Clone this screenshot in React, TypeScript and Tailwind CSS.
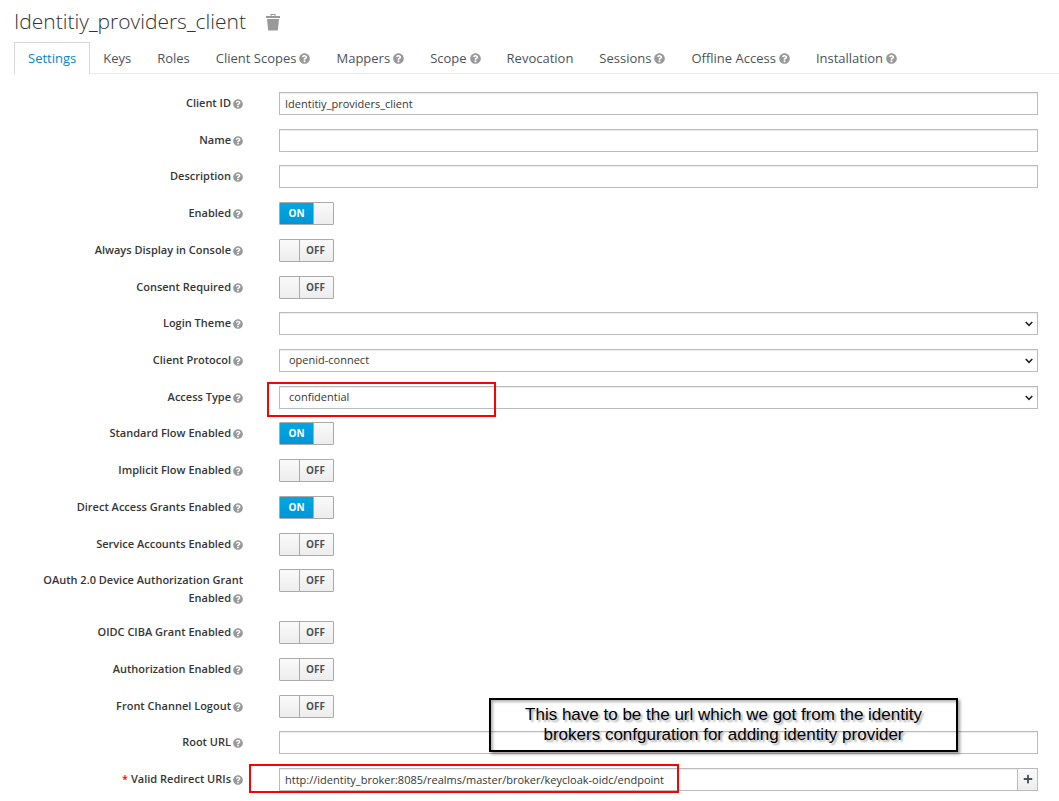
import React, { useState } from 'react';
import clsx from 'clsx';
import { FaQuestionCircle, FaPlus } from 'react-icons/fa';

interface Tab {
  name: string;
  help?: boolean;
}

interface Field {
  id: string;
  label: string;
  kind: 'text' | 'switch' | 'select' | 'list';
  value?: string;
  on?: boolean;
  options?: string[];
  required?: boolean;
  mark?: boolean;
  note?: string[];
}

const tabs: Tab[] = [
  { name: 'Settings' },
  { name: 'Keys' },
  { name: 'Roles' },
  { name: 'Client Scopes', help: true },
  { name: 'Mappers', help: true },
  { name: 'Scope', help: true },
  { name: 'Revocation' },
  { name: 'Sessions', help: true },
  { name: 'Offline Access', help: true },
  { name: 'Installation', help: true },
];

const fields: Field[] = [
  { id: 'clientId', label: 'Client ID', kind: 'text', value: 'Identitiy_providers_client' },
  { id: 'name', label: 'Name', kind: 'text' },
  { id: 'description', label: 'Description', kind: 'text' },
  { id: 'enabled', label: 'Enabled', kind: 'switch', on: true },
  { id: 'alwaysDisplay', label: 'Always Display in Console', kind: 'switch' },
  { id: 'consent', label: 'Consent Required', kind: 'switch' },
  { id: 'loginTheme', label: 'Login Theme', kind: 'select', options: [''] },
  { id: 'protocol', label: 'Client Protocol', kind: 'select', options: ['openid-connect', 'saml'] },
  { id: 'accessType', label: 'Access Type', kind: 'select', options: ['confidential', 'public', 'bearer-only'], mark: true },
  { id: 'standardFlow', label: 'Standard Flow Enabled', kind: 'switch', on: true },
  { id: 'implicitFlow', label: 'Implicit Flow Enabled', kind: 'switch' },
  { id: 'directAccess', label: 'Direct Access Grants Enabled', kind: 'switch', on: true },
  { id: 'serviceAccounts', label: 'Service Accounts Enabled', kind: 'switch' },
  { id: 'deviceGrant', label: 'OAuth 2.0 Device Authorization Grant Enabled', kind: 'switch' },
  { id: 'ciba', label: 'OIDC CIBA Grant Enabled', kind: 'switch' },
  { id: 'authorization', label: 'Authorization Enabled', kind: 'switch' },
  { id: 'frontChannel', label: 'Front Channel Logout', kind: 'switch' },
  {
    id: 'rootUrl',
    label: 'Root URL',
    kind: 'text',
    note: ['This have to be the url which we got from the identity', 'brokers confguration for adding identity provider'],
  },
  {
    id: 'redirectUris',
    label: 'Valid Redirect URIs',
    kind: 'list',
    value: 'http://identity_broker:8085/realms/master/broker/keycloak-oidc/endpoint',
    required: true,
    mark: true,
  },
];

const control = 'block h-[23px] w-full border border-[#bbb] bg-white text-[11px] text-[#363636] shadow-[inset_0_1px_1px_rgba(3,3,3,0.08)] outline-none';

function TrashIcon() {
  return (
    <svg width="14" height="17" viewBox="0 0 14 17" fill="#999" aria-hidden="true">
      <path fillRule="evenodd" d="M4.500 0h5v2H14v2H0V2h4.500zM5.500 1v1h3V1z" />
      <path d="M1 5h12l-1.200 11.500H2.200z" />
    </svg>
  );
}

function Switch({ id, initial = false }: { id: string; initial?: boolean }) {
  const [on, setOn] = useState(initial);

  return (
    <label className="relative flex h-[23px] w-[55px] cursor-pointer overflow-hidden rounded-[1px] border border-[#aaa] text-[10px] font-bold leading-[21px]">
      <input
        id={id}
        type="checkbox"
        checked={on}
        onChange={(e) => setOn(e.target.checked)}
        className="absolute inset-0 m-0 cursor-pointer opacity-0"
      />
      {on && <span className="grow bg-linear-to-b from-[#00a8e1] to-[#0095d9] text-center text-white">ON</span>}
      <span className={clsx('w-5 bg-linear-to-b from-[#fafafa] to-[#ededed] border-[#aaa]', on ? 'border-l' : 'border-r')} />
      {!on && <span className="grow bg-linear-to-b from-[#fafafa] to-[#ededed] pr-[2px] text-center text-[#4d5258]">OFF</span>}
    </label>
  );
}

function Control({ field }: { field: Field }) {
  if (field.kind === 'switch') {
    return <Switch id={field.id} initial={field.on} />;
  }

  if (field.kind === 'select') {
    return (
      <div className="relative">
        <select id={field.id} className={clsx(control, 'appearance-none pl-[9px] pr-6')}>
          {field.options?.map((option) => (
            <option key={option}>{option}</option>
          ))}
        </select>
        <svg className="pointer-events-none absolute right-[5px] top-[9px]" width="8" height="6" viewBox="0 0 8 6" fill="none" stroke="#222" strokeWidth="1.600">
          <path d="M.7 1 4 4.300 7.300 1" />
        </svg>
      </div>
    );
  }

  if (field.kind === 'list') {
    return (
      <div className="flex">
        <input id={field.id} type="text" defaultValue={field.value} className={clsx(control, 'min-w-0 grow px-[5px]')} />
        <button
          type="button"
          aria-label="Add"
          className="-ml-px flex h-[23px] w-[21px] shrink-0 items-center justify-center border border-[#bbb] bg-linear-to-b from-[#fafafa] to-[#ededed] text-[#4d5258]"
        >
          <FaPlus size={10} />
        </button>
      </div>
    );
  }

  return <input id={field.id} type="text" defaultValue={field.value} className={clsx(control, 'px-[5px]')} />;
}

function FormRow({ field }: { field: Field }) {
  return (
    <div className="flex">
      <div className="w-[229px] shrink-0 pt-[2px] text-right text-[11px] font-semibold leading-[18px] text-[#363636]">
        <label htmlFor={field.id}>
          {field.required && <span className="text-[#f00]">* </span>}
          {field.label}
        </label>
        <FaQuestionCircle size={10} className="ml-[2px] inline align-[-2px] text-[#999]" />
      </div>
      <div className="relative ml-9 min-w-0 grow">
        <Control field={field} />
        {field.mark && field.kind === 'select' && (
          <div className="pointer-events-none absolute -left-3 -top-1 h-[35px] w-[229px] border-2 border-[#f00]" />
        )}
        {field.mark && field.kind === 'list' && (
          <div className="pointer-events-none absolute -left-[30px] -top-1 h-[29px] w-[430px] border-2 border-[#f00]" />
        )}
        {field.note && (
          <div className="pointer-events-none absolute left-[210px] -top-[33px] h-[54px] w-[469px] border-2 border-black pt-[5px] text-center font-['Liberation_Sans',Arial,sans-serif] text-[17px] leading-[20px] text-black shadow-[2px_2px_3px_rgba(0,0,0,0.4),inset_2px_2px_3px_rgba(0,0,0,0.3)] [text-shadow:2px_2px_2px_rgba(0,0,0,0.35)]">
            {field.note.map((line) => (
              <p key={line}>{line}</p>
            ))}
          </div>
        )}
      </div>
    </div>
  );
}

export default function App() {
  const [active, setActive] = useState('Settings');

  return (
    <div className="flex min-h-screen flex-col bg-white pb-[10px] pl-[14px] font-['Open_Sans','Noto_Sans',sans-serif]">
      <header className="flex h-[42px] items-center gap-5 pt-[2px]">
        <h1 className="text-[21px] font-light text-[#333]">Identitiy_providers_client</h1>
        <button type="button" aria-label="Delete client">
          <TrashIcon />
        </button>
      </header>

      <nav className="flex h-8 shrink-0 border-b border-[#e9e9e9] text-[13px]">
        {tabs.map((tab) => (
          <button
            key={tab.name}
            type="button"
            onClick={() => setActive(tab.name)}
            className={clsx(
              '-mb-px flex items-center gap-[3px] whitespace-nowrap border border-b-0',
              tab.name === active ? 'border-[#d9d9d9] bg-white px-[13px] text-[#0088ce]' : 'border-transparent px-3 text-[#4d5258]'
            )}
          >
            {tab.name}
            {tab.help && <FaQuestionCircle size={11} className="text-[#999]" />}
          </button>
        ))}
      </nav>

      <form className="flex grow flex-col justify-between pr-[21px] pt-[18px]">
        {fields.map((field) => (
          <FormRow key={field.id} field={field} />
        ))}
      </form>
    </div>
  );
}
